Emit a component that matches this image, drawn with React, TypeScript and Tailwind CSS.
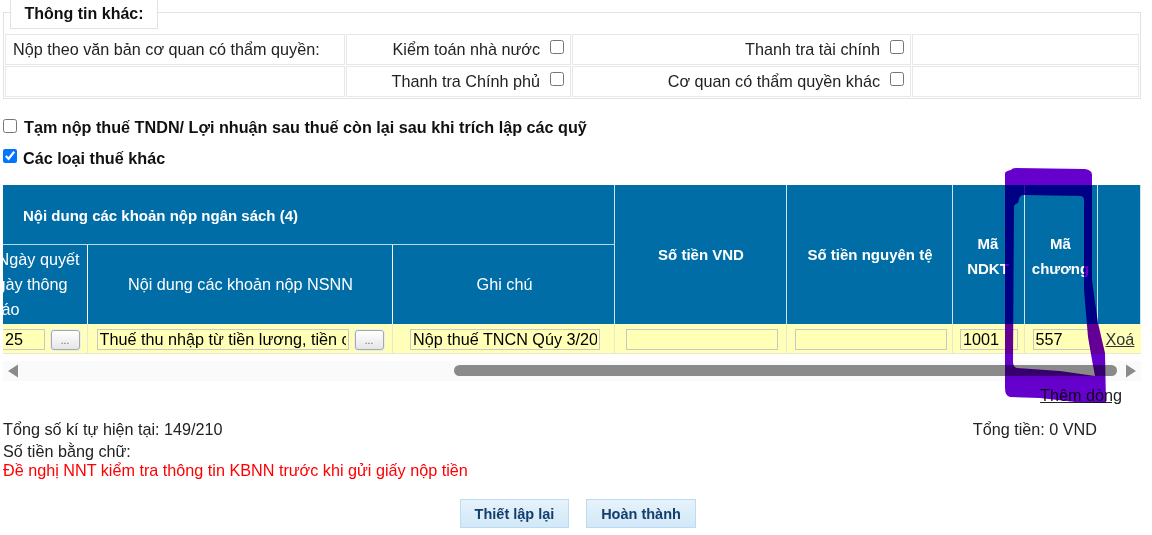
const arial = "font-['Liberation_Sans',Arial,sans-serif]";

function Cb({ checked = false, extra = "" }: { checked?: boolean; extra?: string }) {
  return <input type="checkbox" defaultChecked={checked} className={`m-0 h-[14px] w-[14px] accent-[#0075ff] ${extra}`} style={{ appearance: "auto" }} />;
}

function OptCell({ label }: { label: string }) {
  return (
    <td className="border border-[#e8e8e8] pr-[6px] text-right">
      {label}
      <Cb extra="ml-[10px] align-[1px]" />
    </td>
  );
}

function Dots() {
  return (
    <button className="mt-[2px] h-[20px] w-[29px] shrink-0 rounded-[3px] border border-[#a8a8a8] bg-gradient-to-b from-white to-[#e6e6e6] text-[10px] leading-[20px] text-[#666] shadow-[0_0_0_1px_#e9eef4]">
      ...
    </button>
  );
}

const fieldCls = "h-[21px] border border-[#c8c8c8] bg-[#ffffb5] px-[2px] text-[16.2px] leading-[19px] text-black outline-none";
const divider = "border-l border-[#e8e8d0] text-center";
const headCell = "border-l border-[#cfe3ee] text-[15px] font-bold";

export default function App() {
  return (
    <div className={`${arial} relative h-[535px] w-[1152px] overflow-hidden bg-white text-[16.2px] text-[#222]`}>
      <div className="relative ml-[3px] mt-0 pt-[12px]">
        <div className="relative h-[87px] w-[1138px] border border-[#e2e2e2]">
          <div className="absolute left-[6px] -top-[13px] flex h-[29px] w-[148px] items-center justify-center border border-t-0 border-[#e2e2e2] bg-white text-[16px] font-bold text-[#111]">
            Thông tin khác:
          </div>
          <table className="mt-[20px] w-[1136px] table-fixed border-separate border-spacing-[1px]">
            <colgroup>
              <col className="w-[340px]" />
              <col className="w-[225px]" />
              <col className="w-[339px]" />
              <col />
            </colgroup>
            <tbody>
              <tr className="h-[31px]">
                <td className="border border-[#e8e8e8] pl-[7px]">Nộp theo văn bản cơ quan có thẩm quyền:</td>
                <OptCell label="Kiểm toán nhà nước" />
                <OptCell label="Thanh tra tài chính" />
                <td className="border border-[#e8e8e8]" />
              </tr>
              <tr className="h-[31px]">
                <td className="border border-[#e8e8e8]" />
                <OptCell label="Thanh tra Chính phủ" />
                <OptCell label="Cơ quan có thẩm quyền khác" />
                <td className="border border-[#e8e8e8]" />
              </tr>
            </tbody>
          </table>
        </div>
      </div>

      <div className="mt-[18px] flex h-[20px] items-center gap-[7px] pl-[3px] font-bold text-[#111]">
        <Cb extra="-mt-[3px]" /> <span>Tạm nộp thuế TNDN/ Lợi nhuận sau thuế còn lại sau khi trích lập các quỹ</span>
      </div>
      <div className="mt-[11px] flex h-[20px] items-center gap-[6px] pl-[3px] font-bold text-[#111]">
        <Cb checked extra="-mt-[5px]" /> <span>Các loại thuế khác</span>
      </div>

      <div className="ml-[3px] mt-[17px] w-[1138px] overflow-hidden">
        <table className="w-[1138px] table-fixed border-collapse text-center text-white">
          <colgroup>
            <col className="w-[84px]" />
            <col className="w-[305px]" />
            <col className="w-[222px]" />
            <col className="w-[172px]" />
            <col className="w-[166px]" />
            <col className="w-[72px]" />
            <col className="w-[73px]" />
            <col />
          </colgroup>
          <thead>
            <tr className="h-[59px] bg-[#006da6]">
              <th colSpan={3} className="border-b border-[#b9d8e8] pl-[20px] pt-[3px] text-left text-[15px] font-bold">
                Nội dung các khoản nộp ngân sách (4)
              </th>
              <th rowSpan={2} className={`${headCell} pl-[2px] pt-[1px]`}>Số tiền VND</th>
              <th rowSpan={2} className={`${headCell} pl-[2px] pt-[1px]`}>Số tiền nguyên tệ</th>
              <th rowSpan={2} className={`${headCell} pt-[2px] leading-[25px]`}>Mã<br />NDKT</th>
              <th rowSpan={2} className={`${headCell} pt-[2px] leading-[25px]`}>Mã<br />chương</th>
              <th rowSpan={2} className="border-x border-[#cfe3ee]" />
            </tr>
            <tr className="h-[80px] bg-[#006da6] text-[16.2px]">
              <th className="overflow-hidden whitespace-nowrap font-normal leading-[25px]">
                <div className="flex justify-end pr-[7px]">Ngày quyết</div>
                <div className="flex justify-end pr-[19px]">ngày thông</div>
                <div className="flex justify-end pr-[67px]">báo</div>
              </th>
              <th className="border-l border-white pl-[2px] font-normal">Nội dung các khoản nộp NSNN</th>
              <th className="border-l border-white pl-[3px] font-normal">Ghi chú</th>
            </tr>
          </thead>
          <tbody>
            <tr className="h-[29px] border-b border-[#e8e8d0] bg-[#ffffb9] text-left text-black [&>td]:pt-[2px]">
              <td className="overflow-hidden">
                <div className="flex items-center justify-end gap-[6px] pr-[7px]">
                  <div className={`${fieldCls} w-[42px] overflow-hidden border-l-0 text-left`}>25</div>
                  <Dots />
                </div>
              </td>
              <td className="border-l border-[#e8e8d0] pl-[1px]">
                <div className="flex items-center justify-center gap-[6px]">
                  <input readOnly value="Thuế thu nhập từ tiền lương, tiền công" className={`${fieldCls} w-[252px]`} />
                  <Dots />
                </div>
              </td>
              <td className={`${divider} pl-[4px]`}>
                <input readOnly value="Nộp thuế TNCN Qúy 3/2025" className={`${fieldCls} w-[190px] border-[#b9c0d0] bg-[#e8f0fe]`} />
              </td>
              <td className={`${divider} pl-[4px]`}><input readOnly className={`${fieldCls} w-[152px]`} /></td>
              <td className={`${divider} pl-[4px]`}><input readOnly className={`${fieldCls} w-[152px]`} /></td>
              <td className={`${divider} pl-[2px]`}><input readOnly value="1001" className={`${fieldCls} w-[58px]`} /></td>
              <td className={`${divider} pl-[2px]`}><input readOnly value="557" className={`${fieldCls} w-[58px]`} /></td>
              <td className="border-l border-[#e8e8d0] pl-[8px] text-[16.2px] text-[#333] underline">Xoá</td>
            </tr>
          </tbody>
        </table>
        <div className="mt-[7px] flex h-[20px] items-center bg-[#fafafa]">
          <svg width="16" height="14" viewBox="0 0 16 14" className="ml-[1px]"><path d="M4 7 L14 0.5 V13.5 Z" fill="#8a8a8a" /></svg>
          <div className="ml-[434px] h-[11px] w-[663px] rounded-full bg-[#8a8a8a]" />
          <svg width="16" height="14" viewBox="0 0 16 14" className="ml-[6px]"><path d="M13 7 L3 0.5 V13.5 Z" fill="#8a8a8a" /></svg>
        </div>
      </div>

      <div className="mt-[2px] flex w-[1122px] justify-end underline">Thêm dòng</div>

      <div className="mt-[12px] flex h-[20px] w-[1097px] items-center justify-between pl-[3px]">
        <span>Tổng số kí tự hiện tại: 149/210</span>
        <span>Tổng tiền: 0 VND</span>
      </div>
      <div className="mt-[3px] h-[18px] pl-[3px] leading-[18px]">Số tiền bằng chữ:</div>
      <div className="h-[20px] pl-[3px] leading-[20px] text-[#ff0000]">Đề nghị NNT kiểm tra thông tin KBNN trước khi gửi giấy nộp tiền</div>

      <div className="ml-[460px] mt-[19px] flex gap-[17px]">
        <button className="h-[29px] w-[109px] border border-[#bcdcf5] bg-gradient-to-b from-[#e6f2fb] to-[#d3e8f8] pt-[3px] text-[14.5px] font-bold text-[#123f6d]">Thiết lập lại</button>
        <button className="h-[29px] w-[110px] border border-[#bcdcf5] bg-gradient-to-b from-[#e6f2fb] to-[#d3e8f8] pt-[3px] text-[14.5px] font-bold text-[#123f6d]">Hoàn thành</button>
      </div>

      <svg width="1152" height="535" viewBox="0 0 1152 535" className="pointer-events-none absolute left-0 top-0 mix-blend-multiply">
        <path fillRule="evenodd" fill="#6600cc" d="M1005 173 Q1006 171 1011 170 Q1012 168 1016 168 L1085 169 Q1092 170 1092 175 L1092 280 L1094 295 L1098 323 L1105 353 L1106 403 L1075 402 L1040 398 L1010 397 Q1005 396 1005 388 Z M1014 207 L1013 362 Q1013 367 1017 368 L1060 371 L1095 376 L1092 360 L1088 337 L1084 290 L1084 200 Q1084 196 1080 196 L1024 195 Q1020 195 1019 199 L1018 203 Q1014 204 1014 207 Z" />
      </svg>
    </div>
  );
}
